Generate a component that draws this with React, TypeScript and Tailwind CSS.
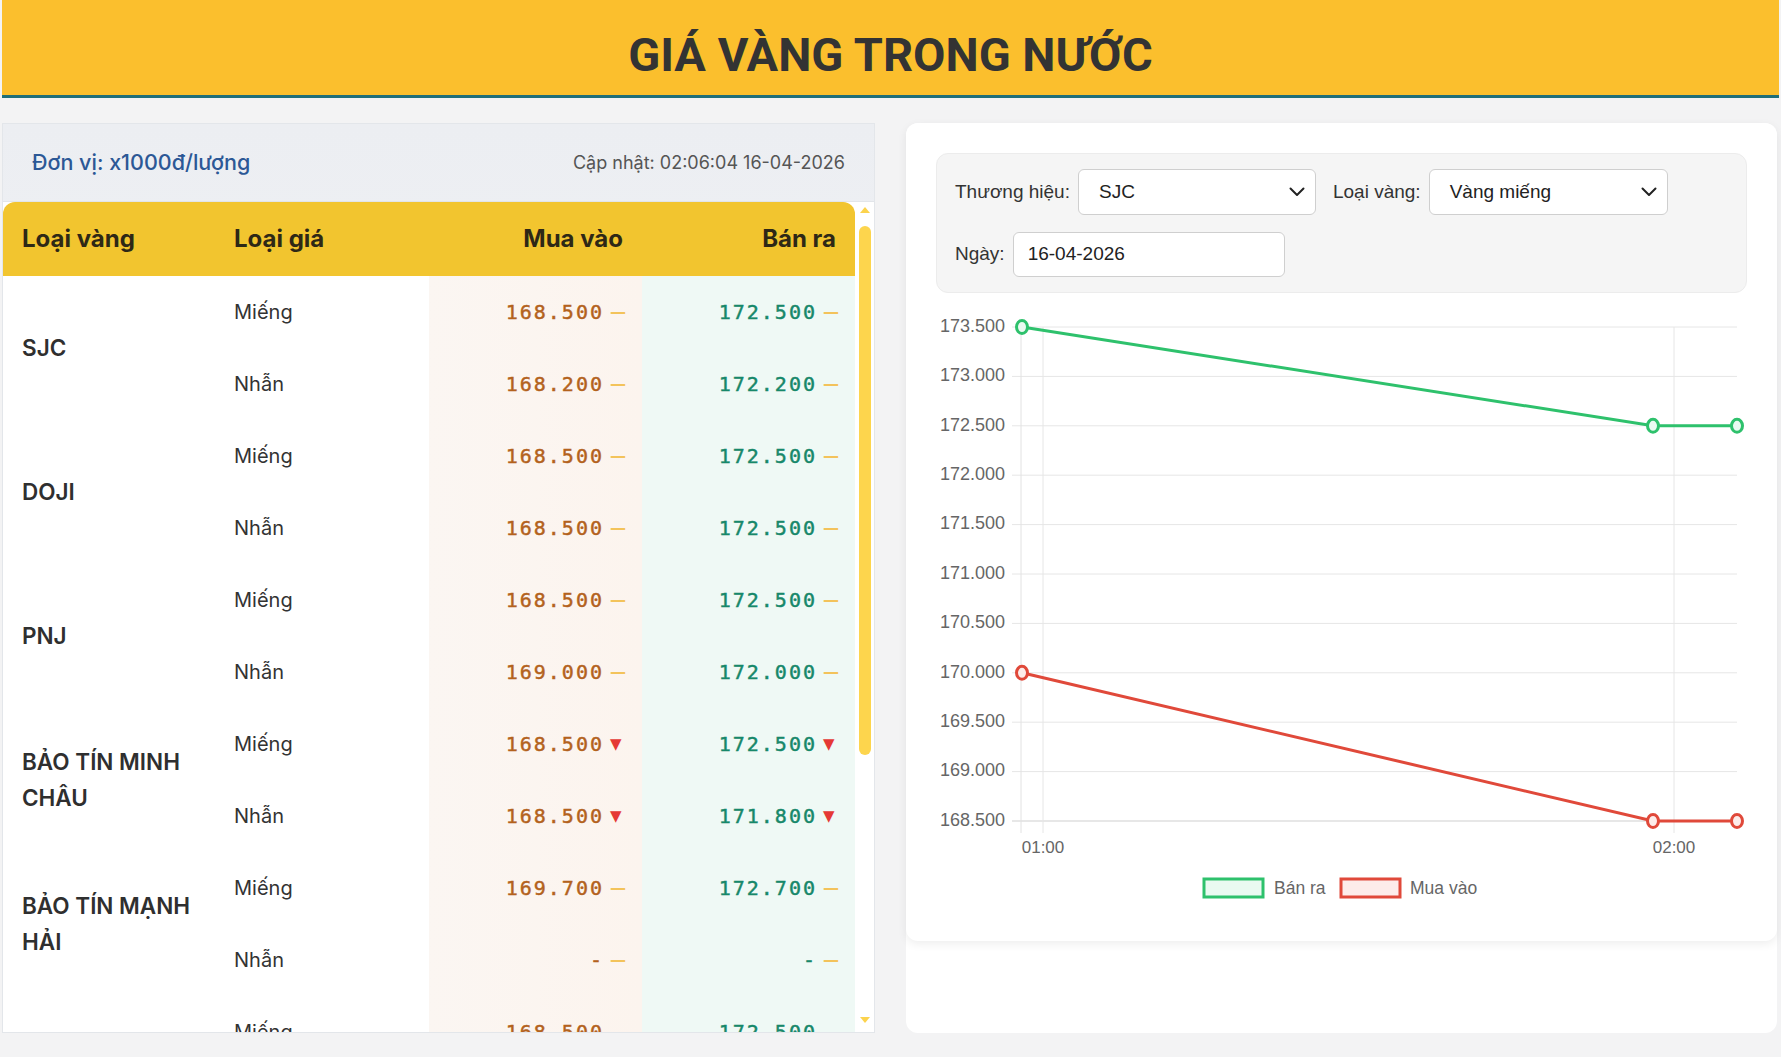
import React from 'react';

type Trend = 'flat' | 'down' | 'up';

interface PriceRow {
  type: string;
  buy: string | null;
  sell: string | null;
  trend: Trend;
}

interface Brand {
  name: string;
  rows: PriceRow[];
}

const BRANDS: Brand[] = [
  {
    name: 'SJC',
    rows: [
      { type: 'Miếng', buy: '168.500', sell: '172.500', trend: 'flat' },
      { type: 'Nhẫn', buy: '168.200', sell: '172.200', trend: 'flat' },
    ],
  },
  {
    name: 'DOJI',
    rows: [
      { type: 'Miếng', buy: '168.500', sell: '172.500', trend: 'flat' },
      { type: 'Nhẫn', buy: '168.500', sell: '172.500', trend: 'flat' },
    ],
  },
  {
    name: 'PNJ',
    rows: [
      { type: 'Miếng', buy: '168.500', sell: '172.500', trend: 'flat' },
      { type: 'Nhẫn', buy: '169.000', sell: '172.000', trend: 'flat' },
    ],
  },
  {
    name: 'BẢO TÍN MINH CHÂU',
    rows: [
      { type: 'Miếng', buy: '168.500', sell: '172.500', trend: 'down' },
      { type: 'Nhẫn', buy: '168.500', sell: '171.800', trend: 'down' },
    ],
  },
  {
    name: 'BẢO TÍN MẠNH HẢI',
    rows: [
      { type: 'Miếng', buy: '169.700', sell: '172.700', trend: 'flat' },
      { type: 'Nhẫn', buy: null, sell: null, trend: 'flat' },
    ],
  },
  {
    name: 'PHÚ QUÝ',
    rows: [
      { type: 'Miếng', buy: '168.500', sell: '172.500', trend: 'flat' },
      { type: 'Nhẫn', buy: '168.000', sell: '171.500', trend: 'flat' },
    ],
  },
];

const Indicator = ({ trend }: { trend: Trend }) =>
  trend === 'down' ? (
    <span className="ml-[6px] inline-block w-[13px] text-left font-['DejaVu_Sans',sans-serif] text-[15px] tracking-normal text-[#e53935] [-webkit-text-stroke:0px]">▼</span>
  ) : (
    <span className="ml-[6px] inline-block w-[13px] text-left font-['DejaVu_Sans',sans-serif] text-[16px] font-bold tracking-normal text-[#f3c35b] [-webkit-text-stroke:0px]">—</span>
  );

const Price = ({ value, trend, color }: { value: string | null; trend: Trend; color: string }) => (
  <span className={`inline-flex items-center font-['DejaVu_Sans_Mono',monospace] text-[20px] tracking-[2px] [-webkit-text-stroke:0.45px_currentColor] ${color}`}>
    {value ?? '-'}
    <Indicator trend={trend} />
  </span>
);

const ScrollBar = () => (
  <div className="flex w-[19px] flex-col items-center bg-white pt-[5px]">
    <div className="h-0 w-0 border-x-[5px] border-b-[6px] border-x-transparent border-b-[#fcd34d]" />
    <div className="mt-[13px] h-[529px] w-[12px] rounded-full bg-[#fdd54d]" />
    <div className="flex-1" />
    <div className="mb-[9px] h-0 w-0 border-x-[5px] border-t-[6px] border-x-transparent border-t-[#fcd34d]" />
  </div>
);

const PriceTable = () => (
  <div className="flex min-h-0 flex-1 border-t border-[#e2e5e9] bg-white">
    <div className="min-w-0 flex-1 overflow-hidden">
      <table className="w-full table-fixed border-collapse">
        <thead>
          <tr className="text-[24px] font-bold text-[#2e2816]">
            <th className="h-[74px] rounded-tl-xl bg-[#f2c52f] px-[19px] text-left">Loại vàng</th>
            <th className="h-[74px] bg-[#f2c52f] px-[18px] text-left">Loại giá</th>
            <th className="h-[74px] bg-[#f2c52f] px-[19px] text-right">Mua vào</th>
            <th className="h-[74px] rounded-tr-xl bg-[#f2c52f] px-[19px] text-right">Bán ra</th>
          </tr>
        </thead>
        <tbody>
          {BRANDS.map((brand) =>
            brand.rows.map((row, i) => (
              <tr key={brand.name + row.type} className="h-[72px]">
                {i === 0 && (
                  <td rowSpan={2} className="px-[19px] align-middle text-[22.5px] font-semibold leading-[36px] text-[#2f2f2f]">
                    {brand.name}
                  </td>
                )}
                <td className="px-[18px] text-[20px] text-[#333]">{row.type}</td>
                <td className="bg-gradient-to-r from-[#fbf6f2] to-[#fcf4ee] px-[19px] text-right">
                  <Price value={row.buy} trend={row.trend} color="text-[#b3621d]" />
                </td>
                <td className="bg-[#eff9f5] px-[19px] text-right">
                  <Price value={row.sell} trend={row.trend} color="text-[#17886a]" />
                </td>
              </tr>
            ))
          )}
        </tbody>
      </table>
    </div>
    <ScrollBar />
  </div>
);

const Chevron = () => (
  <svg width="16" height="10" viewBox="0 0 16 10" className="absolute right-[10px] top-1/2 -translate-y-1/2">
    <path d="M1.5 1.5 L8 8 L14.5 1.5" fill="none" stroke="#222" strokeWidth="2" strokeLinecap="round" strokeLinejoin="round" />
  </svg>
);

const Select = ({ value, width }: { value: string; width: string }) => (
  <div className={`relative flex h-[46px] items-center rounded-md border border-[#cfcfcf] bg-white pl-[20px] text-[19px] text-[#222] ${width}`}>
    {value}
    <Chevron />
  </div>
);

const Y_TICKS = [173.5, 173, 172.5, 172, 171.5, 171, 170.5, 170, 169.5, 169, 168.5];
const yOf = (v: number) => 26 + (173.5 - v) * 98.8;

const SELL = [
  [86, yOf(173.5)],
  [717, yOf(172.5)],
  [801, yOf(172.5)],
];
const BUY = [
  [86, yOf(170)],
  [717, yOf(168.5)],
  [801, yOf(168.5)],
];

const Series = ({ pts, color, fill }: { pts: number[][]; color: string; fill: string }) => (
  <g>
    <polyline points={pts.map((p) => p.join(',')).join(' ')} fill="none" stroke={color} strokeWidth="3" />
    {pts.map(([x, y]) => (
      <ellipse key={x} cx={x} cy={y} rx="5.5" ry="6.5" fill={fill} stroke={color} strokeWidth="3" />
    ))}
  </g>
);

const Chart = () => (
  <svg width="811" height="620" className="mt-[8px] block font-['Liberation_Sans',Arial,sans-serif]">
    {Y_TICKS.map((v) => (
      <g key={v}>
        <line x1="76" x2="801" y1={yOf(v)} y2={yOf(v)} stroke={v === 168.5 ? '#cfcfcf' : '#e6e6e6'} strokeWidth="1" />
        <text x="69" y={yOf(v)} textAnchor="end" dominantBaseline="middle" fontSize="18" fill="#666">
          {v.toFixed(3)}
        </text>
      </g>
    ))}
    <line x1="85" x2="85" y1="26" y2="532" stroke="#e2e2e2" />
    <line x1="107" x2="107" y1="26" y2="532" stroke="#e6e6e6" />
    <line x1="738" x2="738" y1="26" y2="532" stroke="#e6e6e6" />
    <text x="107" y="548" textAnchor="middle" dominantBaseline="middle" fontSize="17" fill="#666">01:00</text>
    <text x="738" y="548" textAnchor="middle" dominantBaseline="middle" fontSize="17" fill="#666">02:00</text>

    <Series pts={SELL} color="#2ec16c" fill="#eafaf1" />
    <Series pts={BUY} color="#e0493a" fill="#fdecea" />

    <rect x="268" y="578" width="59" height="18" fill="#eafaf1" stroke="#2ec16c" strokeWidth="3" />
    <text x="338" y="588" dominantBaseline="middle" fontSize="17.5" fill="#666">Bán ra</text>
    <rect x="405" y="578" width="59" height="18" fill="#fdecea" stroke="#e0493a" strokeWidth="3" />
    <text x="474" y="588" dominantBaseline="middle" fontSize="17.5" fill="#666">Mua vào</text>
  </svg>
);

export default function App() {
  return (
    <div className="min-h-screen bg-[#f3f3f4] px-[2px] font-['Inter','Noto_Sans',sans-serif]">
      <header className="flex h-[98px] items-center justify-center border-b-[3px] border-[#1f6e78] bg-[#fbbf2d] pt-[16px]">
        <h1 className="font-['Roboto',sans-serif] text-[47px] font-bold text-[#333]">GIÁ VÀNG TRONG NƯỚC</h1>
      </header>

      <main className="mt-[25px] flex gap-[31px]">
        <section className="flex h-[910px] w-[873px] flex-col border border-[#e3e6ea] bg-gradient-to-b from-[#eceef2] to-[#f7f8fa]">
          <div className="flex h-[77px] items-center justify-between px-[29px]">
            <span className="text-[21.5px] font-medium text-[#2c5896]">Đơn vị: x1000đ/lượng</span>
            <span className="text-[18px] text-[#555]">Cập nhật: 02:06:04 16-04-2026</span>
          </div>
          <PriceTable />
        </section>

        <section className="h-[910px] w-[871px] rounded-xl bg-white">
          <div className="rounded-xl bg-white px-[30px] pb-[20px] pt-[30px] shadow-[0_3px_10px_rgba(0,0,0,0.07)]">
            <div className="flex flex-col gap-[17px] rounded-xl border border-[#ececec] bg-[#f5f5f5] px-[18px] pb-[15px] pt-[15px] font-['Liberation_Sans',Arial,sans-serif] text-[19px] text-[#333]">
              <div className="flex items-center">
                <span className="mr-[8px]">Thương hiệu:</span>
                <Select value="SJC" width="w-[238px]" />
                <span className="ml-[17px] mr-[8px]">Loại vàng:</span>
                <Select value="Vàng miếng" width="w-[239px]" />
              </div>
              <div className="flex items-center">
                <span className="mr-[8px]">Ngày:</span>
                <div className="flex h-[45px] w-[272px] items-center rounded-md border border-[#cfcfcf] bg-white pl-[14px] text-[#222]">
                  16-04-2026
                </div>
              </div>
            </div>
            <Chart />
          </div>
        </section>
      </main>
    </div>
  );
}
